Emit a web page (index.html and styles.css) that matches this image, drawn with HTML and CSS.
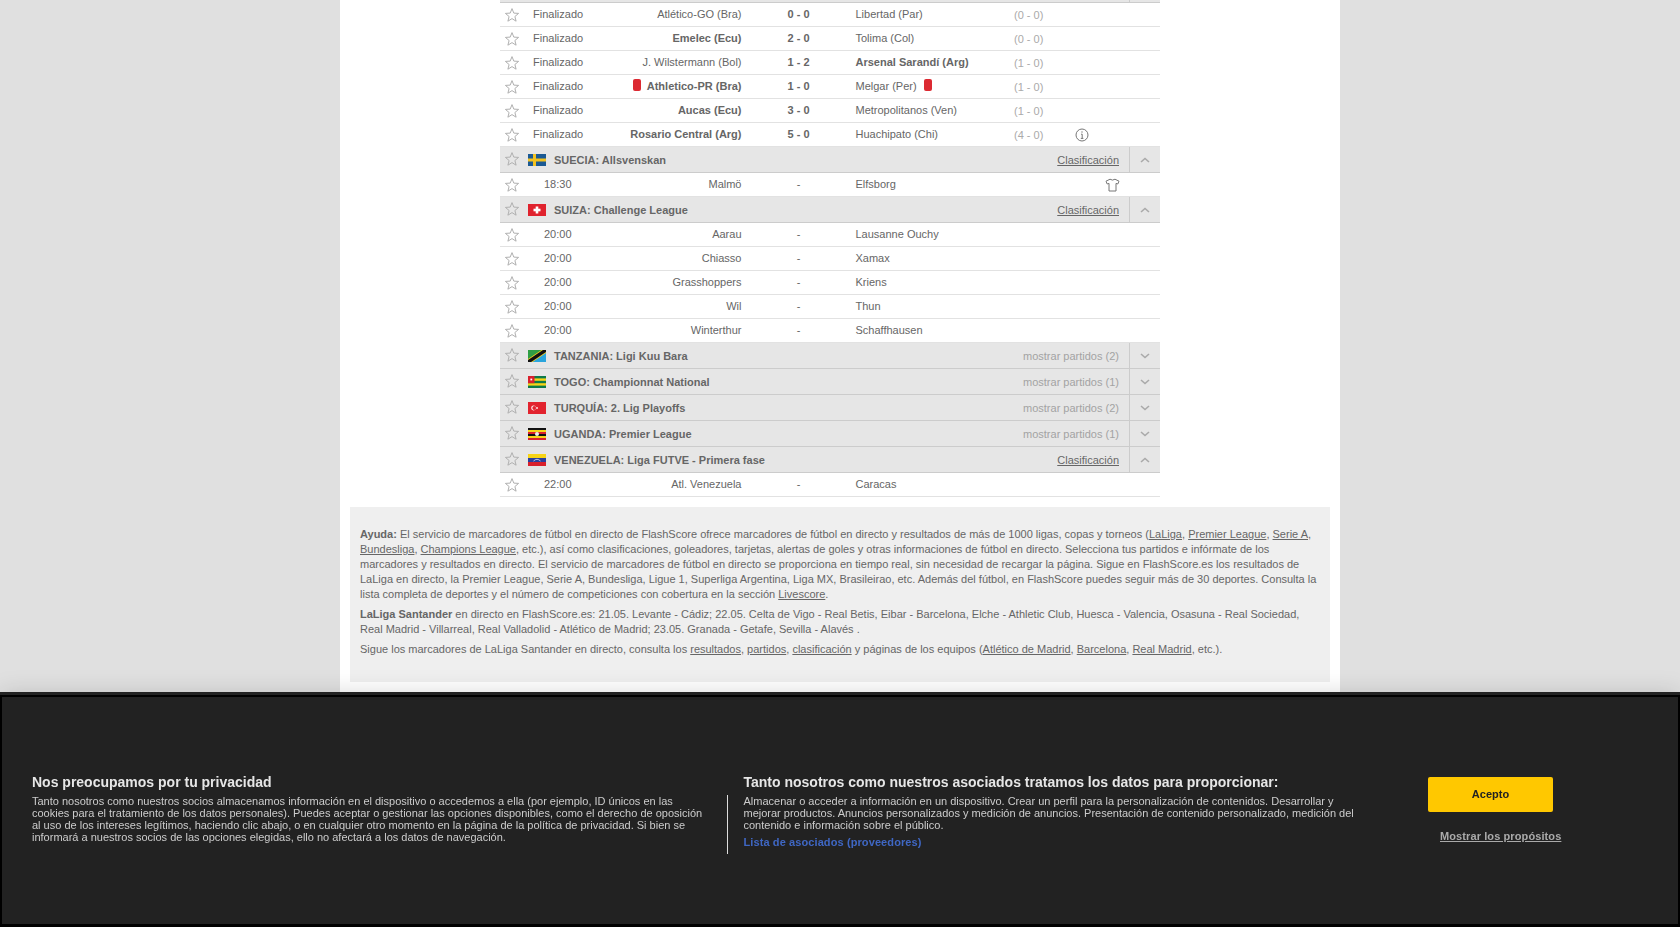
FILE: index.html
```html
<!DOCTYPE html>
<html lang="es">
<head>
    <meta charset="UTF-8">
    <title>Resultados de fútbol en directo</title>
    <link rel="stylesheet" href="styles.css">
</head>
<body>
    <svg class="defs" width="0" height="0">
        <symbol id="star" viewBox="0 0 16 16">
            <path d="M8 1.6 L9.8 6.1 L14.6 6.4 L10.9 9.5 L12.1 14.2 L8 11.6 L3.9 14.2 L5.1 9.5 L1.4 6.4 L6.2 6.1 Z" fill="none" stroke="#b0b0b0" stroke-width="1"/>
        </symbol>
    </svg>

    <div class="page">
        <div class="scores">
            <div class="top-strip"><span class="strip-end"></span></div>

            <div class="row"><svg class="star"><use href="#star"/></svg><span class="status">Finalizado</span><span class="home">Atlético-GO (Bra)</span><span class="score">0 - 0</span><span class="away">Libertad (Par)</span><span class="half">(0 - 0)</span></div>
            <div class="row"><svg class="star"><use href="#star"/></svg><span class="status">Finalizado</span><span class="home win">Emelec (Ecu)</span><span class="score">2 - 0</span><span class="away">Tolima (Col)</span><span class="half">(0 - 0)</span></div>
            <div class="row"><svg class="star"><use href="#star"/></svg><span class="status">Finalizado</span><span class="home">J. Wilstermann (Bol)</span><span class="score">1 - 2</span><span class="away win">Arsenal Sarandí (Arg)</span><span class="half">(1 - 0)</span></div>
            <div class="row"><svg class="star"><use href="#star"/></svg><span class="status">Finalizado</span><span class="home win"><i class="red-card home-card"></i>Athletico-PR (Bra)</span><span class="score">1 - 0</span><span class="away">Melgar (Per)<i class="red-card away-card"></i></span><span class="half">(1 - 0)</span></div>
            <div class="row"><svg class="star"><use href="#star"/></svg><span class="status">Finalizado</span><span class="home win">Aucas (Ecu)</span><span class="score">3 - 0</span><span class="away">Metropolitanos (Ven)</span><span class="half">(1 - 0)</span></div>
            <div class="row"><svg class="star"><use href="#star"/></svg><span class="status">Finalizado</span><span class="home win">Rosario Central (Arg)</span><span class="score">5 - 0</span><span class="away">Huachipato (Chi)</span><span class="half">(4 - 0)</span>
                <svg class="icon" width="14" height="14" viewBox="0 0 14 14"><circle cx="7" cy="7" r="6" fill="none" stroke="#777" stroke-width="1"/><path d="M6 6.2 H7.2 V10.4 M5.8 10.4 H8.4" fill="none" stroke="#777" stroke-width="1"/><rect x="6.4" y="3.4" width="1.2" height="1.2" fill="#777"/></svg>
            </div>

            <div class="league"><svg class="star"><use href="#star"/></svg>
                <svg class="flag" viewBox="0 0 18 12"><rect width="18" height="12" fill="#1c5a94"/><rect x="5" width="3" height="12" fill="#f2c221"/><rect y="4.5" width="18" height="3" fill="#f2c221"/></svg>
                <span class="league-name">SUECIA: Allsvenskan</span><a class="league-link">Clasificación</a>
                <span class="toggle"><svg width="12" height="8" viewBox="0 0 12 8"><path d="M2 6 L6 2.5 L10 6" fill="none" stroke="#aaa" stroke-width="1.6"/></svg></span>
            </div>
            <div class="row"><svg class="star"><use href="#star"/></svg><span class="time">18:30</span><span class="home">Malmö</span><span class="score dash">-</span><span class="away">Elfsborg</span><span class="half"></span><span></span>
                <svg class="icon shirt" width="15" height="14" viewBox="0 0 15 14"><path d="M5 1.2 Q7.5 3 10 1.2 L14 3.2 L12.8 6 L11 5.4 L11 13 L4 13 L4 5.4 L2.2 6 L1 3.2 Z" fill="none" stroke="#777" stroke-width="1"/></svg>
            </div>

            <div class="league"><svg class="star"><use href="#star"/></svg>
                <svg class="flag" viewBox="0 0 18 12"><rect width="18" height="12" fill="#e0232e"/><rect x="7.7" y="2.5" width="2.6" height="7" fill="#fff"/><rect x="5.5" y="4.7" width="7" height="2.6" fill="#fff"/></svg>
                <span class="league-name">SUIZA: Challenge League</span><a class="league-link">Clasificación</a>
                <span class="toggle"><svg width="12" height="8" viewBox="0 0 12 8"><path d="M2 6 L6 2.5 L10 6" fill="none" stroke="#aaa" stroke-width="1.6"/></svg></span>
            </div>
            <div class="row"><svg class="star"><use href="#star"/></svg><span class="time">20:00</span><span class="home">Aarau</span><span class="score dash">-</span><span class="away">Lausanne Ouchy</span></div>
            <div class="row"><svg class="star"><use href="#star"/></svg><span class="time">20:00</span><span class="home">Chiasso</span><span class="score dash">-</span><span class="away">Xamax</span></div>
            <div class="row"><svg class="star"><use href="#star"/></svg><span class="time">20:00</span><span class="home">Grasshoppers</span><span class="score dash">-</span><span class="away">Kriens</span></div>
            <div class="row"><svg class="star"><use href="#star"/></svg><span class="time">20:00</span><span class="home">Wil</span><span class="score dash">-</span><span class="away">Thun</span></div>
            <div class="row"><svg class="star"><use href="#star"/></svg><span class="time">20:00</span><span class="home">Winterthur</span><span class="score dash">-</span><span class="away">Schaffhausen</span></div>

            <div class="league"><svg class="star"><use href="#star"/></svg>
                <svg class="flag" viewBox="0 0 18 12"><rect width="18" height="12" fill="#2aa5dc"/><path d="M0 0 H18 L0 12 Z" fill="#2f9e44"/><path d="M0 12 L18 0" stroke="#f5d020" stroke-width="5"/><path d="M0 12 L18 0" stroke="#111" stroke-width="3.4"/></svg>
                <span class="league-name">TANZANIA: Ligi Kuu Bara</span><a class="league-more">mostrar partidos (2)</a>
                <span class="toggle"><svg width="12" height="8" viewBox="0 0 12 8"><path d="M2 2 L6 5.5 L10 2" fill="none" stroke="#aaa" stroke-width="1.6"/></svg></span>
            </div>
            <div class="league"><svg class="star"><use href="#star"/></svg>
                <svg class="flag" viewBox="0 0 18 12"><rect width="18" height="12" fill="#0d7a4a"/><rect y="2.4" width="18" height="2.4" fill="#f7d417"/><rect y="7.2" width="18" height="2.4" fill="#f7d417"/><rect width="6.5" height="7.2" fill="#d9202c"/><rect x="2.4" y="2.6" width="1.8" height="1.8" fill="#fff"/></svg>
                <span class="league-name">TOGO: Championnat National</span><a class="league-more">mostrar partidos (1)</a>
                <span class="toggle"><svg width="12" height="8" viewBox="0 0 12 8"><path d="M2 2 L6 5.5 L10 2" fill="none" stroke="#aaa" stroke-width="1.6"/></svg></span>
            </div>
            <div class="league"><svg class="star"><use href="#star"/></svg>
                <svg class="flag" viewBox="0 0 18 12"><rect width="18" height="12" fill="#e2232e"/><circle cx="5.6" cy="6" r="2.4" fill="#fff"/><circle cx="6.2" cy="6" r="1.9" fill="#e2232e"/><rect x="8.2" y="5.2" width="1.6" height="1.6" fill="#fff"/></svg>
                <span class="league-name">TURQUÍA: 2. Lig Playoffs</span><a class="league-more">mostrar partidos (2)</a>
                <span class="toggle"><svg width="12" height="8" viewBox="0 0 12 8"><path d="M2 2 L6 5.5 L10 2" fill="none" stroke="#aaa" stroke-width="1.6"/></svg></span>
            </div>
            <div class="league"><svg class="star"><use href="#star"/></svg>
                <svg class="flag" viewBox="0 0 18 12"><rect width="18" height="12" fill="#111"/><rect y="2" width="18" height="2" fill="#f7d417"/><rect y="4" width="18" height="2" fill="#d9202c"/><rect y="8" width="18" height="2" fill="#f7d417"/><rect y="10" width="18" height="2" fill="#d9202c"/><circle cx="9" cy="6" r="2" fill="#eee"/></svg>
                <span class="league-name">UGANDA: Premier League</span><a class="league-more">mostrar partidos (1)</a>
                <span class="toggle"><svg width="12" height="8" viewBox="0 0 12 8"><path d="M2 2 L6 5.5 L10 2" fill="none" stroke="#aaa" stroke-width="1.6"/></svg></span>
            </div>
            <div class="league"><svg class="star"><use href="#star"/></svg>
                <svg class="flag" viewBox="0 0 18 12"><rect width="18" height="4" fill="#f7d417"/><rect y="4" width="18" height="4" fill="#2a3f9e"/><rect y="8" width="18" height="4" fill="#d9202c"/><path d="M5.5 7 Q9 3.6 12.5 7" fill="none" stroke="#fff" stroke-width="0.7"/></svg>
                <span class="league-name">VENEZUELA: Liga FUTVE - Primera fase</span><a class="league-link">Clasificación</a>
                <span class="toggle"><svg width="12" height="8" viewBox="0 0 12 8"><path d="M2 6 L6 2.5 L10 6" fill="none" stroke="#aaa" stroke-width="1.6"/></svg></span>
            </div>
            <div class="row"><svg class="star"><use href="#star"/></svg><span class="time">22:00</span><span class="home">Atl. Venezuela</span><span class="score dash">-</span><span class="away">Caracas</span></div>
        </div>

        <div class="help">
            <p><b>Ayuda:</b> El servicio de marcadores de fútbol en directo de FlashScore ofrece marcadores de fútbol en directo y resultados de más de 1000 ligas, copas y torneos (<a>LaLiga</a>, <a>Premier League</a>, <a>Serie A</a>, <a>Bundesliga</a>, <a>Champions League</a>, etc.), así como clasificaciones, goleadores, tarjetas, alertas de goles y otras informaciones de fútbol en directo. Selecciona tus partidos e infórmate de los marcadores y resultados en directo. El servicio de marcadores de fútbol en directo se proporciona en tiempo real, sin necesidad de recargar la página. Sigue en FlashScore.es los resultados de LaLiga en directo, la Premier League, Serie A, Bundesliga, Ligue 1, Superliga Argentina, Liga MX, Brasileirao, etc. Además del fútbol, en FlashScore puedes seguir más de 30 deportes. Consulta la lista completa de deportes y el número de competiciones con cobertura en la sección <a>Livescore</a>.</p>
            <p><b>LaLiga Santander</b> en directo en FlashScore.es: 21.05. Levante - Cádiz; 22.05. Celta de Vigo - Real Betis, Eibar - Barcelona, Elche - Athletic Club, Huesca - Valencia, Osasuna - Real Sociedad, Real Madrid - Villarreal, Real Valladolid - Atlético de Madrid; 23.05. Granada - Getafe, Sevilla - Alavés .</p>
            <p>Sigue los marcadores de LaLiga Santander en directo, consulta los <a>resultados</a>, <a>partidos</a>, <a>clasificación</a> y páginas de los equipos (<a>Atlético de Madrid</a>, <a>Barcelona</a>, <a>Real Madrid</a>, etc.).</p>
        </div>
    </div>

    <div class="consent">
        <div class="consent-left">
            <h2>Nos preocupamos por tu privacidad</h2>
            <p>Tanto nosotros como nuestros socios almacenamos información en el dispositivo o accedemos a ella (por ejemplo, ID únicos en las cookies para el tratamiento de los datos personales). Puedes aceptar o gestionar las opciones disponibles, como el derecho de oposición al uso de los intereses legítimos, haciendo clic abajo, o en cualquier otro momento en la página de la política de privacidad. Si bien se informará a nuestros socios de las opciones elegidas, ello no afectará a los datos de navegación.</p>
        </div>
        <div class="consent-right">
            <h2>Tanto nosotros como nuestros asociados tratamos los datos para proporcionar:</h2>
            <div class="consent-body">
                <p>Almacenar o acceder a información en un dispositivo. Crear un perfil para la personalización de contenidos. Desarrollar y mejorar productos. Anuncios personalizados y medición de anuncios. Presentación de contenido personalizado, medición del contenido e información sobre el público.</p>
                <a class="vendors">Lista de asociados (proveedores)</a>
            </div>
        </div>
        <div class="consent-actions">
            <button class="accept">Acepto</button>
            <a class="purposes">Mostrar los propósitos</a>
        </div>
    </div>
</body>
</html>
```

FILE: styles.css
```css
html, body {
    margin: 0;
    height: 927px;
    overflow: hidden;
}
body {
    font-family: "Liberation Sans", Arial, sans-serif;
    font-size: 11px;
    color: #666;
    background: #e0e0e0;
}
.defs {
    display: block;
    height: 0;
}
.page {
    width: 1000px;
    height: 927px;
    margin: 0 auto;
    background: white;
}
.scores {
    width: 660px;
    margin-left: 160px;
}
.top-strip {
    height: 3px;
    background: #e6e6e6;
    border-bottom: 1px solid #ccc;
    box-sizing: border-box;
}
.strip-end {
    display: block;
    width: 1px;
    height: 2px;
    margin-left: 629px;
    background: #ccc;
}
.row {
    display: grid;
    grid-template-columns: 33px 56px 152.5px 114px 158.5px 61px 31px 1fr;
    align-items: center;
    height: 24px;
    box-sizing: border-box;
    padding-bottom: 2px;
    border-bottom: 1px solid #e2e2e2;
}
.star {
    width: 16px;
    height: 16px;
    margin-left: 4px;
}
.row .star {
    margin-top: 2px;
}
.icon {
    margin-top: 2px;
}
.shirt {
    margin-left: -1px;
}
.status {
    white-space: nowrap;
}
.time {
    padding-left: 11px;
}
.home {
    text-align: right;
    white-space: nowrap;
}
.score {
    text-align: center;
    font-weight: bold;
}
.score.dash {
    font-weight: normal;
}
.away {
    white-space: nowrap;
}
.win {
    font-weight: bold;
}
.half {
    color: #aaa;
    padding-top: 2px;
}
.red-card {
    display: inline-block;
    width: 8px;
    height: 12px;
    background: #dc2a32;
    border-radius: 2px;
    vertical-align: -1px;
}
.home-card {
    margin-right: 6px;
}
.away-card {
    margin-left: 7px;
}
.league {
    display: flex;
    align-items: center;
    height: 26px;
    box-sizing: border-box;
    background: #e6e6e6;
    border-bottom: 1px solid #ccc;
}
.league .star {
    margin-right: 8px;
    margin-top: -2px;
}
.flag {
    width: 18px;
    height: 12px;
    margin-right: 8px;
}
.league-name {
    font-weight: bold;
    flex: 1;
}
.league-link {
    color: #666;
    text-decoration: underline;
    margin-right: 10px;
}
.league-more {
    color: #a3a3a3;
    margin-right: 10px;
}
.toggle {
    width: 31px;
    height: 100%;
    box-sizing: border-box;
    border-left: 1px solid #ccc;
    display: flex;
    align-items: center;
    justify-content: center;
}
.help {
    margin: 10px 10px 0;
    padding: 20px 10px 25px;
    background: #efefef;
    line-height: 15px;
}
.help p {
    margin: 0 0 5px;
}
.help p:last-child {
    margin-bottom: 0;
}
.help a {
    text-decoration: underline;
}

/* cookie banner sits over the page */
.consent {
    position: fixed;
    left: 0;
    right: 0;
    bottom: 0;
    height: 232px;
    box-sizing: border-box;
    padding-top: 76px;
    background: #222;
    border: 2px solid #000;
    border-bottom-width: 3px;
    box-shadow: 0 -3px 0 #222, 0 0 24px rgba(0,0,0,0.18);
    color: #ccc;
    display: flex;
    align-items: flex-start;
    line-height: 12px;
}
.consent h2 {
    margin: 0 0 4px;
    font-size: 14px;
    line-height: 18px;
    font-weight: bold;
    color: #e6e6e6;
}
.consent p {
    margin: 0;
}
.consent-left {
    width: 672px;
    margin-left: 30px;
}
.consent-right {
    width: 629px;
    margin-left: 22.5px;
}
.consent-right h2 {
    margin-left: 17px;
}
.consent-body {
    padding: 0 0 6px 16px;
    border-left: 1px solid #ddd;
}
.vendors {
    display: block;
    margin-top: 5px;
    color: #3f67c4;
    font-weight: bold;
    letter-spacing: 0.1px;
}
.consent-actions {
    margin-left: 72.5px;
    margin-top: 4px;
    display: flex;
    flex-direction: column;
}
.accept {
    width: 125px;
    height: 35px;
    border: none;
    border-radius: 2px;
    padding: 0 0 2px;
    background: #ffc800;
    color: #222;
    font: bold 11px "Liberation Sans", Arial, sans-serif;
}
.purposes {
    margin: 18px 0 0 12px;
    color: #aaa;
    font-weight: bold;
    text-decoration: underline;
    white-space: nowrap;
    letter-spacing: 0.1px;
}
```
